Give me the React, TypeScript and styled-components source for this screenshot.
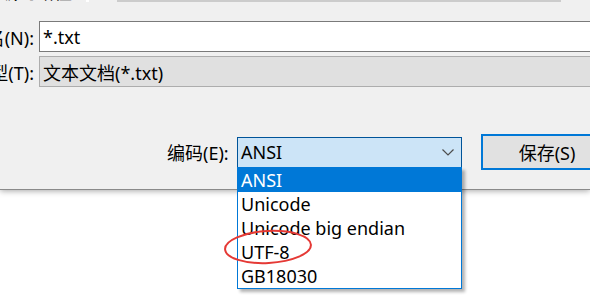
import styled, { createGlobalStyle } from "styled-components";

const GlobalStyle = createGlobalStyle`
  html, body {
    margin: 0;
    padding: 0;
    background: #ffffff;
    overflow: hidden;
  }
  body {
    font-family: "Noto Sans", "Noto Sans CJK SC", sans-serif;
    font-size: 18px;
    color: #000;
  }
`;

const encodings = ["ANSI", "Unicode", "Unicode big endian", "UTF-8", "GB18030"];

export default function App() {
  return (
    <>
      <GlobalStyle />
      <Screen>
        <Dialog>
          <TopStrip>
            <CutLabel>编码路径</CutLabel>
            <Speck />
            <PathBar />
          </TopStrip>
          <FieldRow>
            <FieldLabel>
              <span>名(N):</span>
            </FieldLabel>
            <TextInput>*.txt</TextInput>
          </FieldRow>
          <FieldRow>
            <FieldLabel>
              <span>类型(T):</span>
            </FieldLabel>
            <TextInput $disabled>文本文档(*.txt)</TextInput>
          </FieldRow>
          <Footer>
            <EncodingLabel>编码(E):</EncodingLabel>
            <Combo>
              <span>ANSI</span>
              <Chevron viewBox="0 0 12 7">
                <path d="M0.5 0.5 L6 6 L11.5 0.5" fill="none" stroke="#4d4d4d" strokeWidth="1.2" />
              </Chevron>
            </Combo>
            <SaveButton>保存(S)</SaveButton>
          </Footer>
        </Dialog>
        <DropList>
          {encodings.map((e, i) => (
            <Option key={e} $selected={i === 0}>
              {e}
            </Option>
          ))}
        </DropList>
        <Annotation viewBox="0 0 92 38">
          <ellipse cx="46" cy="19" rx="43" ry="16" fill="none" stroke="#e53935" strokeWidth="2" transform="rotate(-3 46 19)" />
        </Annotation>
      </Screen>
    </>
  );
}

const Screen = styled.div`
  position: relative;
  width: 590px;
  height: 302px;
  overflow: hidden;
  background: #ffffff;
`;

const Dialog = styled.div`
  height: 189px;
  background: #f0f0f0;
  box-shadow: 0 1px 0 #8a8a8a, 0 2px 6px rgba(0, 0, 0, 0.35);
  display: flex;
  flex-direction: column;
`;

const TopStrip = styled.div`
  height: 5px;
  display: flex;
  align-items: flex-start;
  overflow: hidden;
`;

const CutLabel = styled.div`
  width: 86px;
  flex: none;
  margin-top: -20px;
  line-height: 25px;
  white-space: nowrap;
  color: #000;
`;

const Speck = styled.div`
  width: 3px;
  height: 2px;
  flex: none;
  background: #ffffff;
`;

const PathBar = styled.div`
  margin-left: 28px;
  width: 444px;
  height: 2px;
  flex: none;
  background: #cccccc;
`;

const FieldRow = styled.div`
  display: flex;
  align-items: center;
  height: 31px;
  margin-top: 4px;
  &:nth-of-type(2) {
    margin-top: 16px;
  }
`;

const FieldLabel = styled.div`
  width: 39px;
  flex: none;
  display: flex;
  justify-content: flex-end;
  overflow: hidden;
  white-space: nowrap;
  padding-right: 5px;
  box-sizing: border-box;
  & > span {
    flex: none;
  }
`;

const TextInput = styled.div<{ $disabled?: boolean }>`
  flex: none;
  width: 600px;
  height: 31px;
  box-sizing: border-box;
  padding: 0 3px;
  display: flex;
  align-items: center;
  white-space: nowrap;
  background: ${(p) => (p.$disabled ? "#e0e0e0" : "#ffffff")};
  border: 1px solid ${(p) => (p.$disabled ? "#adadad" : "#7a7a7a")};
`;

const Footer = styled.div`
  display: flex;
  align-items: center;
  margin-top: 47px;
  padding-left: 167px;
`;

const EncodingLabel = styled.div`
  width: 70px;
  flex: none;
  white-space: nowrap;
`;

const Combo = styled.div`
  flex: none;
  width: 225px;
  height: 31px;
  box-sizing: border-box;
  border: 1px solid #005499;
  background: #cce4f7;
  display: flex;
  align-items: center;
  justify-content: space-between;
  padding: 0 7px 0 3px;
`;

const Chevron = styled.svg`
  width: 12px;
  height: 7px;
`;

const SaveButton = styled.div`
  flex: none;
  margin-left: 19px;
  width: 132px;
  height: 36px;
  box-sizing: border-box;
  border: 2px solid #0078d7;
  background: #e1e1e1;
  display: flex;
  align-items: center;
  justify-content: center;
`;

const DropList = styled.div`
  position: absolute;
  left: 237px;
  top: 167px;
  width: 225px;
  box-sizing: border-box;
  border: 1px solid #0078d7;
  background: #ffffff;
  box-shadow: 3px 3px 3px rgba(0, 0, 0, 0.3);
  display: flex;
  flex-direction: column;
`;

const Option = styled.div<{ $selected?: boolean }>`
  height: 24px;
  line-height: 24px;
  padding-left: 3px;
  white-space: nowrap;
  background: ${(p) => (p.$selected ? "#0078d7" : "transparent")};
  color: ${(p) => (p.$selected ? "#ffffff" : "#000000")};
`;

const Annotation = styled.svg`
  position: absolute;
  left: 222px;
  top: 228px;
  width: 92px;
  height: 38px;
`;
